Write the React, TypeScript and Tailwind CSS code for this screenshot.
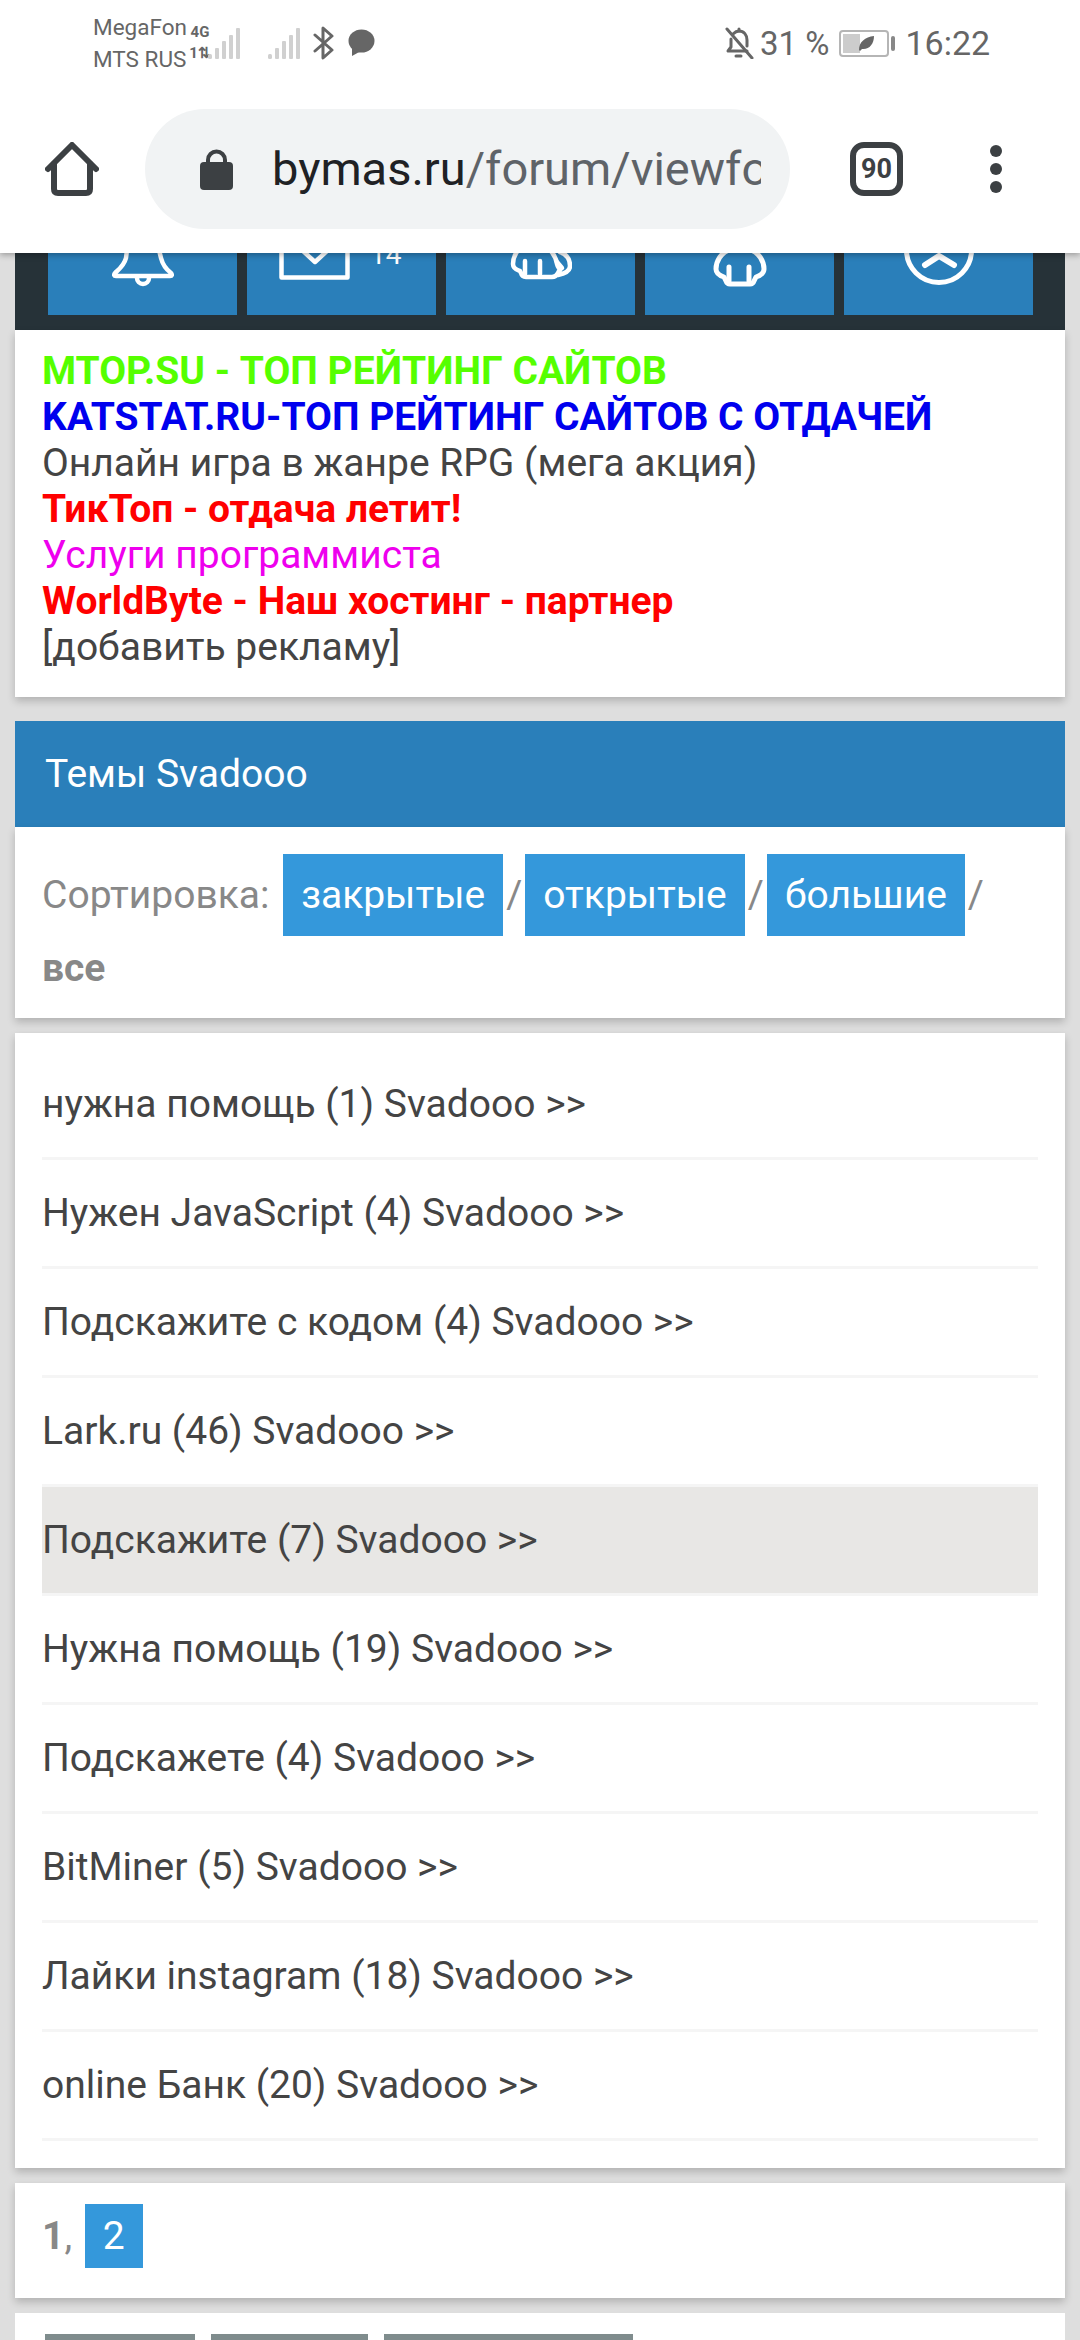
const rows = [
  "нужна помощь (1) Svadooo >>",
  "Нужен JavaScript (4) Svadooo >>",
  "Подскажите с кодом (4) Svadooo >>",
  "Lark.ru (46) Svadooo >>",
  "Подскажите (7) Svadooo >>",
  "Нужна помощь (19) Svadooo >>",
  "Подскажете (4) Svadooo >>",
  "BitMiner (5) Svadooo >>",
  "Лайки instagram (18) Svadooo >>",
  "online Банк (20) Svadooo >>",
]

function Signal() {
  return (
    <svg width="34" height="32" viewBox="0 0 34 32" fill="#d0d0d0">
      <rect x="0" y="26" width="4" height="5" rx="1.5" />
      <rect x="7" y="20" width="4" height="11" rx="1" />
      <rect x="14" y="13" width="4" height="18" rx="1" />
      <rect x="21" y="7" width="4" height="24" rx="1" />
      <rect x="28" y="0" width="4" height="31" rx="1" />
    </svg>
  )
}

function StatusBar() {
  return (
    <div className="flex h-[86px] items-center text-[#666666]">
      <div className="ml-[93px] flex w-[97px] flex-col text-[22.5px] leading-[32px]">
        <span>MegaFon</span>
        <span>MTS RUS</span>
      </div>
      <div className="ml-[2px] flex w-[16px] flex-col items-center whitespace-nowrap text-[15px] font-bold leading-[21px]">
        <span>4G</span>
        <span>1⇅</span>
      </div>
      <div className="mt-[2px]">
        <Signal />
      </div>
      <div className="ml-[26px] mt-[2px]">
        <Signal />
      </div>
      <svg className="ml-[11px]" width="22" height="34" viewBox="0 0 22 34" fill="none" stroke="#666666" strokeWidth="3" strokeLinejoin="round" strokeLinecap="round">
        <path d="M2 9 L19 24 L10 32 V2 L19 10 L2 25" />
      </svg>
      <svg className="ml-[12px]" width="28" height="28" viewBox="0 0 28 28" fill="#666666">
        <ellipse cx="14.5" cy="12" rx="13" ry="11.5" />
        <path d="M5 18 L5 27 L14 22 Z" />
      </svg>

      <svg className="ml-[349px]" width="30" height="32" viewBox="0 0 28 32" fill="none" stroke="#666666" strokeWidth="3" strokeLinecap="round" strokeLinejoin="round">
        <path d="M8 7 C11 4 12 4 14 4 C19 4 22 8 22 13 V19" />
        <path d="M6 12 V20 L3 24 H22" />
        <path d="M11 29 H16" />
        <path d="M14 2 V4" />
        <path d="M2 2 L27 31" />
      </svg>
      <span className="ml-[6px] text-[33px] leading-none">31 %</span>
      <div className="ml-[10px] flex items-center gap-[2px]">
        <div className="relative h-[27px] w-[50px] rounded-[4px] border-2 border-[#b5b5b5] p-[2px]">
          <div className="h-full w-[17px] bg-[#cccccc]" />
          <svg className="absolute left-[17px] top-[3px]" width="17" height="17" viewBox="0 0 17 17" fill="#666666">
            <path d="M1 15 C1 7 7 2 16 1 C16 9 11 15 4 14 L2 16 Z" />
          </svg>
        </div>
        <div className="h-[15px] w-[4px] rounded-[2px] bg-[#888888]" />
      </div>
      <span className="ml-[10px] text-[34px] leading-none">16:22</span>
    </div>
  )
}

function Toolbar() {
  return (
    <div className="flex h-[167px] items-center pb-[1px] pl-[45px]">
      <svg width="54" height="54" viewBox="0 0 54 54" fill="none" stroke="#3c4043" strokeWidth="6" strokeLinejoin="round" strokeLinecap="round">
        <path d="M3 27 L27 3 L51 27" />
        <path d="M9 22 V47 Q9 51 13 51 H41 Q45 51 45 47 V22" />
      </svg>
      <div className="ml-[46px] flex h-[120px] w-[645px] items-center rounded-full bg-[#f1f3f4] pl-[55px]">
        <svg width="33" height="43" viewBox="0 0 33 43" fill="#3c4043">
          <path d="M6 15 V12 A10.5 10.5 0 0 1 27 12 V15 H23 V12 A6.5 6.5 0 0 0 10 12 V15 Z" />
          <rect x="0" y="14" width="33" height="28" rx="4" />
        </svg>
        <div className="ml-[39px] w-[489px] overflow-hidden whitespace-nowrap text-[47px] leading-[60px] text-[#5f6368]">
          <span className="text-[#202124]">bymas.ru</span>/forum/viewforum
        </div>
      </div>
      <div className="ml-[60px] flex h-[54px] w-[53px] items-center justify-center rounded-[14px] border-[6px] border-[#3c4043] text-[27px] font-bold leading-none text-[#3c4043]">
        90
      </div>
      <div className="ml-[87px] flex flex-col gap-[6px]">
        <div className="h-[12px] w-[12px] rounded-full bg-[#3c4043]" />
        <div className="h-[12px] w-[12px] rounded-full bg-[#3c4043]" />
        <div className="h-[12px] w-[12px] rounded-full bg-[#3c4043]" />
      </div>
    </div>
  )
}

function NavIcons() {
  const btn = "flex h-[62px] w-[189px] shrink-0 justify-center overflow-hidden bg-[#2a7fba]"
  return (
    <div className="flex h-[77px] gap-[10px] overflow-hidden bg-[#263238] pl-[33px]">
      <div className={btn + " items-end pb-[27px]"}>
        <svg className="shrink-0" width="62" height="62" viewBox="0 0 62 62" fill="none" stroke="white" strokeWidth="4.5" strokeLinejoin="round">
          <path d="M31 3 C20 3 15 12 15 24 L14 32 C12 40 6 44 3 47 Q1 50 4 50 H58 Q61 50 59 47 C55 44 51 40 49 32 L47 24 C47 12 42 3 31 3 Z" />
          <path d="M25 52 A6 6 0 0 0 37 52" />
        </svg>
      </div>
      <div className={btn + " items-end !justify-start pb-[35px] pl-[32px]"}>
        <svg className="shrink-0" width="71" height="60" viewBox="0 0 71 60" fill="none" stroke="white" strokeWidth="4.5" strokeLinejoin="round">
          <rect x="2.5" y="2.5" width="66" height="55" />
          <path d="M12 20 L36 42 L60 20" />
        </svg>
        <span className="mb-[11px] ml-[20px] text-[28px] leading-[28px] text-white">14</span>
      </div>
      <div className={btn + " items-end pb-[33px]"}>
        <svg className="shrink-0" width="62" height="40" viewBox="0 0 62 40" fill="none" stroke="white" strokeWidth="4.5" strokeLinejoin="round" strokeLinecap="round">
          <path d="M14 3 C7 8 3 14 3 22 C3 27 7 28 10 29 L11 31 Q12 35 16 35 H42 Q46 35 48 31 L49 29 C52 28 48 27 47 22 C46 14 41 8 34 3" />
          <path d="M15 19 V32 M30 19 V32" />
          <path d="M50 10 C56 12 60 17 60 24 C60 30 53 32 48 33" />
          <path d="M47 20 L52 26" />
        </svg>
      </div>
      <div className={btn + " items-end pb-[28px]"}>
        <svg className="shrink-0" width="54" height="40" viewBox="0 0 54 40" fill="none" stroke="white" strokeWidth="5" strokeLinejoin="round" strokeLinecap="round">
          <path d="M16 3 C8 6 3 14 3 22 C3 27 8 29 11 30 L13 34 Q14 37 17 37 H37 Q40 37 41 34 L43 30 C46 29 51 27 51 22 C51 14 46 6 38 3" />
          <path d="M16 20 V34 M36 20 V34" />
        </svg>
      </div>
      <div className={btn + " items-end pb-[30px]"}>
        <svg className="shrink-0" width="70" height="70" viewBox="0 0 70 70" fill="none" stroke="white" strokeWidth="5" strokeLinecap="round">
          <circle cx="35" cy="35" r="32.5" />
          <path d="M21 50 L35 41 L50 50" strokeWidth="6" />
        </svg>
      </div>
    </div>
  )
}

export default function App() {
  const sortLink = "bg-[#3498db] px-[18px] py-[18px] text-white"
  return (
    <div className="h-[2340px] w-[1080px] overflow-hidden bg-[#dedede] font-['Roboto',sans-serif] text-[39px] text-[#444444]">
      <header className="relative z-10 bg-white shadow-[0_2px_6px_rgba(0,0,0,0.3)]">
        <StatusBar />
        <Toolbar />
      </header>

      <main className="px-[15px]">
        <NavIcons />

        <div className="bg-white px-[27px] pb-[27px] pt-[18px] leading-[46px] shadow-[0_4px_8px_rgba(0,0,0,0.2)]">
          <div className="font-bold text-[#55ff00]">MTOP.SU - ТОП РЕЙТИНГ САЙТОВ</div>
          <div className="font-bold text-[#0000ee]">KATSTAT.RU-ТОП РЕЙТИНГ САЙТОВ С ОТДАЧЕЙ</div>
          <div>Онлайн игра в жанре RPG (мега акция)</div>
          <div className="font-bold text-[#ff0000]">ТикТоп - отдача летит!</div>
          <div className="text-[#ee00ee]">Услуги программиста</div>
          <div className="font-bold text-[#ff0000]">WorldByte - Наш хостинг - партнер</div>
          <div>[добавить рекламу]</div>
        </div>

        <div className="mt-[24px] flex h-[106px] items-center bg-[#2a7fba] px-[30px] text-white">Темы Svadooo</div>
        <div className="bg-white px-[27px] pb-[13px] pt-[32px] leading-[73px] text-[#888888] shadow-[0_4px_8px_rgba(0,0,0,0.2)]">
          Сортировка: <span className={"ml-[4px] " + sortLink}>закрытые</span>
          <span className="px-[3px]">/</span>
          <span className={sortLink}>открытые</span>
          <span className="px-[3px]">/</span>
          <span className={sortLink}>большие</span>
          <span className="px-[3px]">/</span> <b>все</b>
        </div>

        <div className="mt-[15px] bg-white px-[27px] pb-[27px] pt-[18px] shadow-[0_4px_8px_rgba(0,0,0,0.2)]">
          {rows.map((row, i) => (
            <div key={row} className={"flex h-[109px] items-center border-b-[3px] border-[#f5f5f5] " + (i === 4 ? "bg-[#e8e7e5]" : "")}>
              {row}
            </div>
          ))}
        </div>

        <div className="mt-[15px] h-[115px] bg-white px-[27px] pt-[17px] leading-[73px] text-[#888888] shadow-[0_4px_8px_rgba(0,0,0,0.2)]">
          <b>1</b>, <span className="ml-[3px] bg-[#3498db] px-[18px] py-[9px] text-white">2</span>
        </div>

        <div className="mt-[15px] flex h-[100px] gap-[16px] bg-white pl-[30px] pt-[21px]">
          <div className="h-[60px] w-[150px] bg-[#7f8c8d]" />
          <div className="h-[60px] w-[157px] bg-[#7f8c8d]" />
          <div className="h-[60px] w-[249px] bg-[#7f8c8d]" />
        </div>
      </main>
    </div>
  )
}
